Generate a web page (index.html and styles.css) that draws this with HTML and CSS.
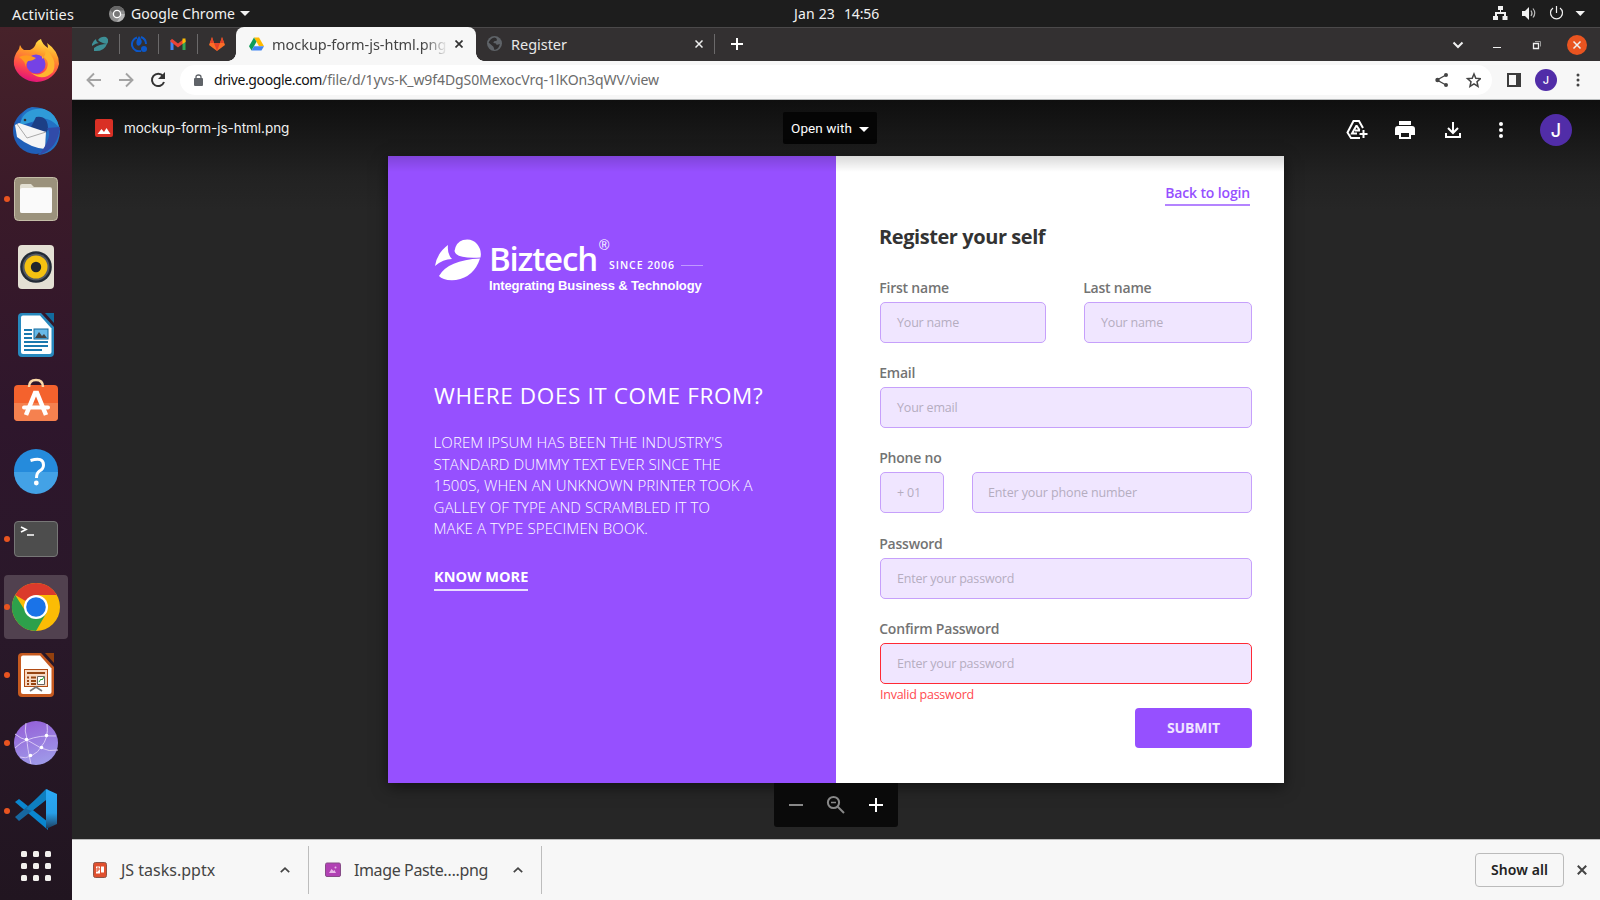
FILE: index.html
```html
<!DOCTYPE html>
<html lang="en">
<head>
<meta charset="utf-8">
<title>mockup-form-js-html.png - Google Drive</title>
<link rel="stylesheet" href="styles.css">
</head>
<body>
<header class="topbar">
  <span class="ui activities">Activities</span>
  <svg class="app-icon" viewBox="0 0 16 16"><circle cx="8" cy="8" r="8" fill="#8e8e8e"/><path d="M8 0A8 8 0 0 1 15 4.500H8L4 7 1 4A8 8 0 0 1 8 0Z" fill="#666"/><path d="M8 8h7.800A8 8 0 0 1 8 16l3.500-6Z" fill="#b5b5b5"/><circle cx="8" cy="8" r="3.600" fill="#777" stroke="#fff" stroke-width="1.300"/></svg>
  <span class="ui appname">Google Chrome</span>
  <svg class="caret" viewBox="0 0 10 6"><path d="M0 0h10L5 5Z" fill="#f2f2f2"/></svg>
  <span class="ui clock"><span class="day">Jan 23</span><span class="time">14:56</span></span>
  <svg class="tray" viewBox="0 0 100 27" fill="#f2f2f2"><path d="M6 6h5v4H9v2h5v4h1.500v4h-5v-4H12v-2H5v2h1v4H1v-4h2v-4h5v-2H6Z"/><path d="M30 11h3l4-4v13l-4-4h-3Z"/><path d="M39 10.500q2 3 0 5.500M41 8.500q3.500 4.500 0 9" fill="none" stroke="#bbb" stroke-width="1.200"/><path d="M61 8A6 6 0 1 0 68 8M64.500 6v7" fill="none" stroke="#f2f2f2" stroke-width="1.200"/><path d="M83.500 11h9.500l-4.700 5Z"/></svg>
</header>
<div class="desktop">
  <nav class="dock">
    <div class="slot"><svg viewBox="0 0 64 64"><defs><linearGradient id="fx" x1=".7" y1="0" x2=".4" y2="1"><stop offset="0" stop-color="#ffe94a"/><stop offset=".35" stop-color="#ff9a2a"/><stop offset=".7" stop-color="#ff4a4a"/><stop offset="1" stop-color="#e0127a"/></linearGradient></defs><path d="M37 8q1 5 7 9 0-3-1-5 12 8 12 21a23 22 0 0 1-45 1q-1-9 5-16l1-4q1 3 4 5l6 0q5-2 6-7 2-3 5-4Z" fill="url(#fx)"/><circle cx="32" cy="33" r="9.500" fill="#7542e5"/><path d="M15 26q8-4 17 1-3 3-8 3-2 2-2 6-1-6-7-10Z" fill="#ff9a20"/><path d="M38 25q9 5 4 14-6 7-15 3 12 9 22-1 4-9-2-17-3-5-6-7 2 7-3 11Z" fill="#ffb52e"/></svg></div>
    <div class="slot"><svg viewBox="0 0 64 64"><circle cx="32" cy="32" r="23" fill="#1f5fb8"/><path d="M17 20Q18 10 28 8q24 0 28 24-1 22-22 24l8-8 0-20Z" fill="#2370c4"/><path d="M16 25Q20 8 40 10q12 4 15 18-12-12-22-7-11 5-17 4Z" fill="#2f9bd8"/><path d="M32 18q12-2 12 12l-2 4-16-4Z" fill="#1c3f86"/><path d="m11 26 4-2 27 9-1 17q-14-1-28-12Z" fill="#f5f5f5"/><path d="m13 25 10 14 19-6" fill="none" stroke="#aaa"/><path d="M56 28q-2 22-21 28 15-20 8-27Z" fill="#314ba9"/><circle cx="21" cy="21" r="1.300" fill="#333"/></svg></div>
    <div class="slot running"><svg viewBox="0 0 64 64"><rect x="10.500" y="10.500" width="43" height="43" rx="4" fill="#9b927c" stroke="#c5bea8"/><path d="M16 19q0-2 2-2h9l3 3h16q2 0 2 2v22q0 2-2 2H18q-2 0-2-2Z" fill="#e2dfd2"/><rect x="16" y="21" width="32" height="25" rx="2" fill="#fafafa"/></svg></div>
    <div class="slot"><svg viewBox="0 0 64 64"><rect x="14" y="10" width="36" height="44" rx="4" fill="#e4e0d4"/><circle cx="32" cy="32" r="15.800" fill="#222a35"/><circle cx="32" cy="32" r="13.500" fill="#555b63"/><circle cx="32" cy="32" r="11.500" fill="#f5c211"/><circle cx="32" cy="32" r="5.200" fill="#20252c"/></svg></div>
    <div class="slot"><svg viewBox="0 0 64 64"><path d="M18 10h19l13 14v26q0 4-4 4H18q-4 0-4-4V14q0-4 4-4Z" fill="#2788bd"/><path d="M19 12.500h17l11.500 13V49q0 2-2 2H19q-2 0-2-2V14.500q0-2 2-2Z" fill="#fff"/><path d="M41 10h9v10Z" fill="#126b9e"/><path d="M20 27h8M20 31h8M20 35h8M20 39h24M20 43h24M20 47h18" stroke="#1a78ae" stroke-width="2"/><rect x="30" y="26" width="14" height="10" fill="#68b9e8" stroke="#126b9e"/><path d="m31 35 4-6 3 4 2-2 3 4Z" fill="#444"/></svg></div>
    <div class="slot"><svg viewBox="0 0 64 64"><rect x="10" y="14" width="44" height="36" rx="4" fill="#f4622d"/><path d="M10 32h44v14q0 4-4 4H14q-4 0-4-4Z" fill="#f5814f"/><path d="M25 16q0-7 7-7t7 7" fill="none" stroke="#fbd9a8" stroke-width="2.500"/><path d="m22 44 9-22h2l9 22" fill="none" stroke="#fff" stroke-width="4.500"/><path d="M20 36.500h24" stroke="#fff" stroke-width="4" stroke-linecap="round"/></svg></div>
    <div class="slot"><svg viewBox="0 0 64 64"><circle cx="32" cy="32" r="22" fill="#258bdc"/><path d="M10 33h44a22 22 0 0 1-44 0Z" fill="#43a2e6"/><path d="M26.500 21.500q13-4 13 4.500 0 4-4 6-3 2-3 7" fill="none" stroke="#fff" stroke-width="3"/><circle cx="32.300" cy="44" r="2.400" fill="#fff"/></svg></div>
    <div class="slot running"><svg viewBox="0 0 64 64"><rect x="10.500" y="14.500" width="43" height="35" rx="3.500" fill="#4d4d4d" stroke="#777"/><path d="m17 20 5 2.500-5 2.500M23 28h7" fill="none" stroke="#fff" stroke-width="1.700"/></svg></div>
    <div class="slot running active"><svg viewBox="0 0 64 64"><circle cx="32" cy="32" r="24" fill="#fbbc05"/><path d="M32 32 11.200 20A24 24 0 0 1 52.800 20Z" fill="#db3a2c"/><path d="M32 20h20.800L44 32Z" fill="#fbbc05"/><path d="M11.200 20A24 24 0 0 0 32 56l10.400-18H32L20 34Z" fill="#2da04b"/><circle cx="32" cy="32" r="12" fill="#fff"/><circle cx="32" cy="32" r="9.800" fill="#1a73e8"/></svg></div>
    <div class="slot running"><svg viewBox="0 0 64 64"><path d="M18 10h19l13 14v26q0 4-4 4H18q-4 0-4-4V14q0-4 4-4Z" fill="#c65a20"/><path d="M19 12.500h17l11.500 13V49q0 2-2 2H19q-2 0-2-2V14.500q0-2 2-2Z" fill="#fff"/><path d="M41 10h9v10Z" fill="#92400e"/><rect x="20.500" y="26.500" width="23" height="17" fill="#f8d9c3" stroke="#b04b14"/><path d="M23 30h18M27 34.500h5M27 38h5M27 41h5M23 34.500h2M23 38h2M23 41h2" stroke="#964412" stroke-width="1.800"/><path d="M33.500 33.500h7v8h-7Z" fill="#fff" stroke="#666"/><path d="m35 39 2-3 1 1 2-3" fill="none" stroke="#26a026"/><path d="m26 48 6-4 6 4" fill="none" stroke="#777" stroke-width="1.600"/></svg></div>
    <div class="slot running"><svg viewBox="0 0 64 64"><defs><linearGradient id="wb" x1=".3" y1="0" x2=".6" y2="1"><stop offset="0" stop-color="#9561d8"/><stop offset="1" stop-color="#9f9be9"/></linearGradient></defs><circle cx="32" cy="32" r="22" fill="url(#wb)"/><path d="M22 12q-2 8 1 16 0 8 4 25M43 13q2 14-6 23-2 5-10 9-6 3-11 1M11 23q6 5 12 6l14 8q8 4 17 2M11 37q6-6 12-8 12-5 29-4" fill="none" stroke="#d8c8f5" stroke-width="1"/><g fill="#fff"><circle cx="22.500" cy="28.500" r="1.800"/><circle cx="42.500" cy="24.500" r="1.800"/><circle cx="37.500" cy="36.500" r="1.800"/><circle cx="26.500" cy="44.500" r="1.800"/></g></svg></div>
    <div class="slot running"><svg viewBox="0 0 64 64"><defs><linearGradient id="vs" x1="0" y1="0" x2="0" y2="1"><stop offset="0" stop-color="#2aaaf5"/><stop offset=".6" stop-color="#279fe8"/><stop offset="1" stop-color="#1d3d5e"/></linearGradient></defs><path d="m11 23 4-3 29 23v8Z" fill="#0a86cf"/><path d="m11 38 4 4 29-23v-9Z" fill="#1767a0"/><path d="m22 30 20-20v11L28 32Z" fill="#0e7fc0"/><path d="m42 10 11 5v30l-11 5Z" fill="url(#vs)"/></svg></div>
    <div class="apps"><i></i><i></i><i></i><i></i><i></i><i></i><i></i><i></i><i></i></div>
  </nav>
  <main class="browser">
    <div class="tabs">
      <div class="pin"><svg viewBox="0 0 16 16" fill="#3d8f96"><path d="M6 4q3-4 8-3 4 3 1 7Q9 7 6 4ZM0 8q1-3 4-5 0 3 3 4-3 0-7 3ZM2 12q5-4 13-4-3 8-13 7Z"/></svg></div>
      <div class="pin"><svg viewBox="0 0 16 16"><path d="M6 1.500A7 7 0 1 0 10 15M10 1q5 2 5 7" fill="none" stroke="#0b57c9" stroke-width="2"/><path d="M8 0q4 5 2 8-2 3-4 1-2-3 2-9Z" fill="#0b57c9"/><circle cx="13" cy="13" r="3" fill="#0b57c9"/></svg></div>
      <div class="pin"><svg viewBox="0 0 16 16"><path d="M2 14V4" stroke="#4285f4" stroke-width="3"/><path d="M14 14V4" stroke="#34a853" stroke-width="3"/><path d="m1 4 7 5.500L15 4" fill="none" stroke="#ea4335" stroke-width="3"/><path d="M12.500 2.500H15.500V6l-3 2Z" fill="#fbbc04"/></svg></div>
      <div class="pin last"><svg viewBox="0 0 16 16"><path d="M3 1 0 9l8 6 8-6-3-8-2 6H5Z" fill="#fc6d26"/><path d="M3 1 1 7h4ZM13 1l2 6h-4ZM5 7h6l-3 8Z" fill="#e24329"/></svg></div>
      <div class="tab current">
        <svg class="drive" viewBox="0 0 16 14"><path d="M5.300 0h5.400L16 9.500h-5.300Z" fill="#ffba00"/><path d="M5.300 0 0 9.500 2.700 14 8 4.700Z" fill="#0f9d58"/><path d="M5.300 9.500H16L13.300 14H2.700Z" fill="#4285f4"/></svg>
        <span class="ui title">mockup-form-js-html.png</span>
        <svg class="x" viewBox="0 0 8 8"><path d="m.5.5 7 7m0-7-7 7" stroke="#333" stroke-width="1.700"/></svg>
      </div>
      <div class="tab other">
        <svg class="globe" viewBox="0 0 14 14"><circle cx="7" cy="7" r="7" fill="#5f6368"/><path d="M7 1.500q3 1 2 3-3 0-3 2 3 0 3 2l3-1q-1 5-5 5.500L6 10 1.500 6q2-4 5.500-4.500Z" fill="#2f2d2e"/></svg>
        <span class="ui title">Register</span>
        <svg class="x" viewBox="0 0 8 8"><path d="m.5.5 7 7m0-7-7 7" stroke="#eee" stroke-width="1.500"/></svg>
      </div>
      <svg class="plus" viewBox="0 0 12 12"><path d="M6 0v12M0 6h12" stroke="#fff" stroke-width="2"/></svg>
      <svg class="winctl" viewBox="0 0 140 34" fill="none" stroke="#f0f0f0"><path d="m4.500 15.500 4.500 4.500 4.500-4.500" stroke-width="2"/><path d="M44 20.500h8"/><path d="M84.500 16.500h5v5h-5Z" stroke-width="1.300"/><path d="M86 14.500h5.500v5" stroke="#999"/><circle cx="128" cy="18" r="10" fill="#e95420" stroke="none"/><path d="m124.500 14.500 7 7m0-7-7 7" stroke-width="1.500"/></svg>
    </div>
    <div class="toolbar">
      <svg class="nav" viewBox="0 0 80 20" fill="none" stroke-width="1.900"><path d="M15 10H2m6-6.500L1.500 10 8 16.500M33 10h13m-6-6.500 6.500 6.500-6.500 6.500" stroke="#a3a3a3"/><path d="M77 6a6.200 6.200 0 1 0 1 6" stroke="#333" stroke-width="2"/><path d="M79 2v7h-7Z" fill="#333"/></svg>
      <div class="omnibox">
        <svg class="lock" viewBox="0 0 9 12"><rect y="4" width="9" height="8" rx="1" fill="#5f6368"/><path d="M2 5V3q0-2 2.500-2T7 3v2" fill="none" stroke="#5f6368" stroke-width="1.300"/></svg>
        <span class="ui url"><b class="host">drive.google.com</b><span class="path">/file/d/1yvs-K_w9f4DgS0MexocVrq-1lKOn3qWV/view</span></span>
        <svg class="share" viewBox="0 0 46 16" fill="none" stroke="#444"><path d="M11 3 2 8l9 5" stroke-width="1.400"/><g fill="#444" stroke="none"><circle cx="11" cy="3" r="2"/><circle cx="2.500" cy="8" r="2.200"/><circle cx="11" cy="13" r="2"/></g><path d="m39 2 1.800 4.200 4.700.4-3.500 3.100 1 4.600-4-2.500-4 2.500 1-4.600-3.500-3.100 4.700-.4Z" stroke-width="1.500"/></svg>
      </div>
      <svg class="side" viewBox="0 0 14 14"><path d="M0 0h14v14H0ZM2 2v10h7V2Z" fill="#3c3c3c" fill-rule="evenodd"/></svg>
      <span class="avatar small">J</span>
      <svg class="menu" viewBox="0 0 4 14" fill="#444"><circle cx="2" cy="2" r="1.500"/><circle cx="2" cy="7" r="1.500"/><circle cx="2" cy="12" r="1.500"/></svg>
    </div>
    <section class="viewer">
      <div class="viewer-head">
        <svg class="filetype" viewBox="0 0 18 18"><rect width="18" height="18" rx="2" fill="#d93025"/><path d="m2.500 15 4-5 2.500 3 2.500-4 4 6Z" fill="#fff"/></svg>
        <span class="fname">mockup-form-js-html.png</span>
        <div class="openwith"><span>Open with</span><svg viewBox="0 0 10 5"><path d="M0 0h10L5 5Z" fill="#fff"/></svg></div>
        <svg class="actions" viewBox="0 0 160 24" fill="none" stroke="#fff" stroke-width="2"><path d="M15 20H6l-3.500-5.500L8.500 3H14l4 7M11.500 7.500 7 15.500h5M11.500 7.500l3 4.500M10 12.500h5"/><path d="M18.500 12v8m-4-4h8"/><path d="M54 3h12v4H54ZM53 8h14q3 0 3 3v6h-4v4H54v-4h-4v-6q0-3 3-3Zm3 7v4h8v-4Z" fill="#fff" fill-rule="evenodd" stroke="none"/><path d="M108 4v11m-5-5 5 5 5-5M101 15v4h14v-4"/><g fill="#fff" stroke="none"><circle cx="156" cy="6" r="2"/><circle cx="156" cy="12" r="2"/><circle cx="156" cy="18" r="2"/></g></svg>
        <span class="avatar">J</span>
      </div>
      <article class="mockup">
        <div class="promo">
          <div class="logo">
            <svg class="mark" viewBox="0 0 46 42" fill="#fff"><path d="M19.500 12Q21 3 28 1q9-2 14 4 5 6 3.500 13.500Q21 20 19.500 12ZM0 27Q2 14 13 6q-1 9 4 14Q8 20 0 27ZM4 37q9-16 41-17.500Q39 38 21 41 8 42 4 37Z"/></svg>
            <div class="brand">
              <div class="brand-row"><span class="bt">Biztech</span><span class="reg">®</span><span class="since">SINCE 2006</span><i></i></div>
              <div class="tag">Integrating Business &amp; Technology</div>
            </div>
          </div>
          <h2>WHERE DOES IT COME FROM?</h2>
          <p>LOREM IPSUM HAS BEEN THE INDUSTRY'S<br>STANDARD DUMMY TEXT EVER SINCE THE<br>1500S, WHEN AN UNKNOWN PRINTER TOOK A<br>GALLEY OF TYPE AND SCRAMBLED IT TO<br>MAKE A TYPE SPECIMEN BOOK.</p>
          <a class="more">KNOW MORE</a>
        </div>
        <div class="form">
          <a class="back">Back to login</a>
          <h1>Register your self</h1>
          <div class="row names">
            <div class="field"><label>First name</label><div class="input">Your name</div></div>
            <div class="field"><label>Last name</label><div class="input">Your name</div></div>
          </div>
          <div class="field"><label>Email</label><div class="input">Your email</div></div>
          <div class="field tall"><label>Phone no</label><div class="row phone"><div class="input">+ 01</div><div class="input num">Enter your phone number</div></div></div>
          <div class="field"><label>Password</label><div class="input">Enter your password</div></div>
          <div class="field confirm"><label>Confirm Password</label><div class="input invalid">Enter your password</div></div>
          <div class="error">Invalid password</div>
          <div class="submit">SUBMIT</div>
        </div>
      </article>
      <div class="zoombar"><svg viewBox="0 0 124 44" fill="none" stroke-width="2"><path d="M15 22h14" stroke="#888"/><g stroke="#888"><circle cx="59.500" cy="19.500" r="5.600"/><path d="M57 19.500h5" stroke-width="1.500"/><path d="m63.500 23.500 6.500 6.500"/></g><path d="M95 22h14m-7-7v14" stroke="#fff"/></svg></div>
    </section>
    <footer class="downloads">
      <div class="dl first"><svg class="ficon" viewBox="0 0 16 18"><rect x="1.500" y="1.500" width="13" height="15" rx="2" fill="#e0502f" stroke="#8d5548"/><path d="M4 5.500h4v7H4ZM9 5.500h3v6H9Z" fill="#fff"/><path d="M5 11V7h2v2H5" fill="none" stroke="#e0502f"/></svg><span class="ui">JS tasks.pptx</span><svg class="chev" viewBox="0 0 10 6"><path d="m.8 5.200 4.200-4 4.200 4" fill="none" stroke="#444" stroke-width="1.700"/></svg></div>
      <div class="dl second"><svg class="ficon" viewBox="0 0 16 18"><rect x=".5" y="2" width="15" height="13.500" rx="1.500" fill="#b141b4" stroke="#864d87"/><path d="m4 12 2.500-4 2 2 1-1 1.500 3Z" fill="#e8b9e8"/><circle cx="10.500" cy="6.500" r="1" fill="#e8b9e8"/></svg><span class="ui">Image Paste….png</span><svg class="chev" viewBox="0 0 10 6"><path d="m.8 5.200 4.200-4 4.200 4" fill="none" stroke="#444" stroke-width="1.700"/></svg></div>
      <div class="showall ui">Show all</div>
      <svg class="close" viewBox="0 0 10 10"><path d="m.8.8 8.400 8.400m0-8.400L.8 9.200" stroke="#444" stroke-width="2"/></svg>
    </footer>
  </main>
</div>
</body>
</html>
```

FILE: styles.css
```css
* { box-sizing: border-box; }
html, body { margin: 0; height: 100%; overflow: hidden; }
body { width: 1600px; height: 900px; display: flex; flex-direction: column; font-family: "Open Sans", "Noto Sans", sans-serif; background: #262626; }
svg { display: block; flex: none; }
span, label, a { white-space: nowrap; }
.ui { font-family: "Noto Sans", sans-serif; font-size: 14px; line-height: 20px; }

/* Desktop panel */
.topbar { height: 27px; flex: none; display: flex; align-items: center; background: #1d1d1d; color: #f2f2f2; }
.activities { margin-left: 12px; width: 97px; font-size: 14.500px; letter-spacing: .16px; }
.app-icon { width: 16px; height: 16px; margin-right: 6px; }
.appname { width: 109px; letter-spacing: .05px; }
.caret { width: 10px; height: 6px; }
.clock { margin-left: 544px; width: 86px; display: flex; gap: 9px; flex: none; }
.day { letter-spacing: .17px; }
.time { letter-spacing: -.16px; }
.tray { width: 100px; height: 27px; margin-left: 612px; }

/* Dock */
.desktop { flex: 1; display: flex; min-height: 0; }
.dock { width: 72px; flex: none; padding: 4px 0 0 4px; display: flex; flex-direction: column; gap: 4px; background: linear-gradient(#47222a 0, #3a1a29 20%, #2e162c 45%, #291829 70%, #211520 100%); }
.slot { position: relative; width: 64px; height: 64px; flex: none; border-radius: 4px; }
.slot svg { width: 64px; height: 64px; }
.slot.active { background: #51414f; }
.slot.running::before { content: ""; position: absolute; left: 0; top: 29px; width: 6px; height: 6px; border-radius: 3px; background: #e95420; }
.apps { width: 30px; margin: 4px 0 0 17px; display: grid; grid-template-columns: repeat(3, 6px); gap: 6px; }
.apps i { width: 6px; height: 6px; border-radius: 1.500px; background: #f2f0ee; }

/* Browser chrome */
.browser { flex: 1; display: flex; flex-direction: column; min-width: 0; background: #f7f7f7; }
.tabs { height: 34px; flex: none; display: flex; align-items: center; padding-bottom: 2px; background: #333031; border-top: 1px solid #4b494a; }
.pin { width: 39px; height: 20px; display: flex; align-items: center; justify-content: center; border-right: 1px solid #6b696a; }
.pin:first-child { width: 48px; padding-left: 8px; }
.pin.last { border: 0; width: 38px; }
.pin svg { width: 16px; height: 16px; }
.tab { display: flex; align-items: center; }
.current { position: relative; width: 240px; height: 34px; align-self: flex-start; margin-top: -1px; padding: 0 0 1px 13px; background: #f7f7f7; color: #444; border-radius: 8px 8px 0 0; }
.current::before, .current::after { content: ""; position: absolute; bottom: 0; width: 8px; height: 8px; }
.current::before { left: -8px; background: radial-gradient(circle at 0 0, transparent 7.500px, #f7f7f7 8px); }
.current::after { right: -8px; background: radial-gradient(circle at 100% 0, transparent 7.500px, #f7f7f7 8px); }
.drive { width: 15px; height: 14px; margin-right: 8px; }
.tab .title { font-size: 14.500px; letter-spacing: -.03px; }
.current .title { width: 176px; overflow: hidden; -webkit-mask-image: linear-gradient(90deg, #000 86%, transparent); mask-image: linear-gradient(90deg, #000 86%, transparent); }
.x { width: 8px; height: 8px; margin-left: 7px; }
.other { width: 239px; height: 20px; padding-left: 11px; color: #e8e8e8; border-right: 1px solid #6b696a; }
.globe { width: 15px; height: 15px; margin-right: 9px; }
.other .title { width: 177px; }
.plus { width: 12px; height: 12px; margin-left: 16px; }
.winctl { width: 140px; height: 34px; margin-left: auto; margin-right: 11px; }

.toolbar { height: 39px; flex: none; display: flex; align-items: center; border-bottom: 1px solid #b9bcbd; }
.nav { width: 80px; height: 20px; margin: 0 14px 0 14px; }
.omnibox { width: 1312px; height: 30px; padding-left: 14px; display: flex; align-items: center; background: #fff; border-radius: 15px; }
.lock { width: 9px; height: 12px; margin-right: 11px; }
.url { flex: 1; color: #6b6b6b; letter-spacing: -.08px; }
.host { font-weight: 400; color: #111; letter-spacing: -.4px; }
.share { width: 46px; height: 16px; margin-right: 11px; }
.side { width: 14px; height: 14px; margin: 0 14px 0 15px; }
.avatar { width: 32px; height: 32px; flex: none; border-radius: 50%; background: #512da8; color: #fff; font: 500 18px/33px Inter, sans-serif; text-align: center; }
.avatar.small { width: 22px; height: 22px; font-size: 11px; line-height: 22px; }
.menu { width: 4px; height: 14px; margin-left: 19px; }

/* File viewer */
.viewer { height: 739px; flex: none; display: flex; flex-direction: column; align-items: center; background: linear-gradient(#0f0f0f, #222 76px, #262626 110px); }
.viewer-head { width: 100%; height: 56px; flex: none; display: flex; align-items: flex-start; }
.filetype { width: 18px; height: 18px; margin: 19px 11px 0 23px; }
.fname { width: 659px; margin-top: 18px; font: 400 13.500px/20px Inter, sans-serif; letter-spacing: -.03px; color: #f0f0f0; }
.openwith { width: 94px; height: 32px; margin-top: 12px; padding-left: 8px; display: flex; align-items: center; background: #050505; border-radius: 2px; font: 13.500px/32px Roboto, sans-serif; color: #fff; }
.openwith span { width: 61px; letter-spacing: .1px; }
.openwith svg { width: 10px; height: 5px; margin: 2px 0 0 7px; }
.actions { width: 160px; height: 24px; margin: 18px 0 0 468px; }
.viewer-head .avatar { margin: 14px 0 0 35px; }

.mockup { position: relative; width: 896px; height: 627px; flex: none; display: flex; background: #fff; box-shadow: 0 4px 14px rgba(0, 0, 0, .5); }
.mockup::before { content: ""; position: absolute; inset: 0 0 auto; height: 16px; background: linear-gradient(rgba(0, 0, 0, .15), transparent); }
.promo { width: 448px; padding: 83px 0 0 46px; background: #9650ff; color: #fff; }
.logo { display: flex; height: 56px; margin-left: 1px; }
.mark { width: 46px; height: 42px; margin: 0 8px 0 0; }
.brand-row { display: flex; height: 38px; }
.bt { width: 110px; font: 600 33px/39px "Open Sans", sans-serif; letter-spacing: -1.170px; }
.reg { width: 10px; margin-top: -2px; font: 14px/16px "Liberation Sans", sans-serif; }
.since { width: 72px; font: 600 10.500px/53px "Open Sans", sans-serif; letter-spacing: .950px; }
.brand-row i { width: 22px; height: 1px; margin-top: 26px; background: #c09aff; }
.tag { font: bold 13px/17px "Liberation Sans", sans-serif; letter-spacing: -.140px; white-space: nowrap; }
h2 { margin: 84px 0 0; font: 400 22.500px/34px "Open Sans", sans-serif; letter-spacing: .620px; white-space: nowrap; }
.promo p { margin: 19px 0 0 -.5px; font: 300 15px/21.500px "Open Sans", sans-serif; letter-spacing: .120px; white-space: nowrap; }
.more { display: inline-block; margin-top: 26px; height: 25px; font: 700 14.500px/22px "Open Sans", sans-serif; letter-spacing: .080px; border-bottom: 2px solid #e9dcff; }
.form { flex: 1; padding: 25px 32px 0 44px; display: flex; flex-direction: column; color: #737373; }
.back { align-self: flex-end; height: 25px; margin-right: 2px; font: 600 14px/24px "Open Sans", sans-serif; letter-spacing: -.150px; color: #9650ff; border-bottom: 2px solid #b484ff; }
h1 { margin: 16px 0 24px -1px; font: 700 20px/30px "Open Sans", sans-serif; letter-spacing: -.430px; color: #333; }
.row { display: flex; }
.names { gap: 38px; }
.names .field:first-child { width: 166px; }
.names .field:last-child { flex: 1; }
.field { height: 85px; }
.tall { height: 86px; }
.confirm { height: 68px; }
.field label { display: block; height: 26px; margin-left: -.8px; font: 600 14px/24px "Open Sans", sans-serif; letter-spacing: -.210px; }
.input { height: 41px; padding-left: 16px; background: #f0e6ff; border: 1px solid #c6a0fb; border-radius: 5px; font: 400 12.500px/39px "Open Sans", sans-serif; letter-spacing: -.190px; color: #b5adbf; }
.phone { gap: 28px; }
.phone .input { width: 64px; }
.phone .num { flex: 1; padding-left: 15px; letter-spacing: -.120px; }
.invalid { border-color: #ff2a35; }
.error { height: 21px; font: 400 12.500px/20px "Open Sans", sans-serif; letter-spacing: -.250px; color: #ff4a50; }
.submit { align-self: flex-end; width: 117px; height: 40px; margin-top: 2px; background: #9650ff; border-radius: 4px; color: #f0e4ff; font: 700 14px/39px "Open Sans", sans-serif; letter-spacing: -.080px; text-align: center; }
.zoombar { position: relative; width: 124px; height: 44px; background: #0a0a0a; border-radius: 0 0 3px 3px; }
.zoombar svg { width: 124px; height: 44px; }

/* Download shelf */
.downloads { flex: 1; display: flex; align-items: center; padding-bottom: 1px; border-top: 1px solid #bbb; color: #444; }
.dl { height: 48px; display: flex; align-items: center; border-right: 1px solid #bdbdbd; }
.dl .ui { width: 159px; margin-left: 13px; font-size: 16px; }
.ficon { width: 16px; height: 18px; }
.chev { width: 10px; height: 6px; }
.first { width: 237px; padding-left: 20px; }
.second { width: 233px; padding-left: 16px; }
.second .ui { letter-spacing: -.380px; }
.showall { margin-left: auto; width: 89px; height: 34px; border: 1px solid #bbb; border-radius: 4px; text-align: center; line-height: 32px; font-weight: 600; letter-spacing: .080px; color: #222; }
.close { width: 10px; height: 10px; margin: 0 13px; }
```
